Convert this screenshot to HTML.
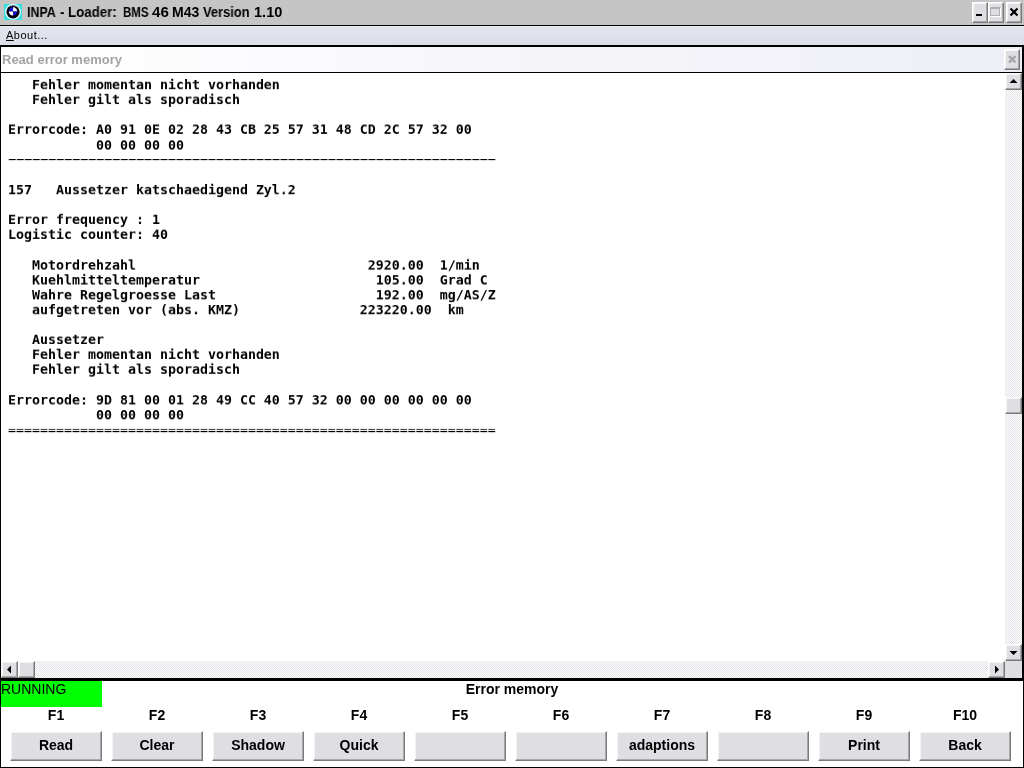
<!DOCTYPE html>
<html>
<head>
<meta charset="utf-8">
<title>INPA - Loader: BMS 46 M43 Version 1.10</title>
<style>
*{box-sizing:border-box;margin:0;padding:0}
html,body{width:1024px;height:768px;overflow:hidden;background:#fff}
body{position:relative;font-family:"Liberation Sans",sans-serif;color:#000}
.abs{position:absolute}
#root{position:absolute;left:0;top:0;width:1024px;height:768px;overflow:hidden;will-change:transform}
#titlebar{left:0;top:0;width:1024px;height:25px;background:#c5c5c5}
#title{left:0;top:3px;font-size:13.5px;font-weight:bold;line-height:18px;white-space:pre;transform-origin:0 0;transform:scaleY(1.1)}
#title span{position:absolute;top:0;transform-origin:0 0;display:block;will-change:transform}
#line1{left:0;top:25px;width:1024px;height:1px;background:#000}
#menubar{left:0;top:26px;width:1024px;height:19px;background:linear-gradient(#ecedf5 0,#e3e5ee 2px,#dfe1ea 60%,#dcdee8 100%)}
#about{left:6px;top:28px;font-size:11px;line-height:14px;letter-spacing:0.5px;will-change:transform}
#line2{left:0;top:45px;width:1024px;height:2px;background:#000}
#lborder{left:0;top:45px;width:1px;height:723px;background:#000}
#rborder{left:1023px;top:45px;width:1px;height:723px;background:#000}
#rborder2{left:1022px;top:45px;width:1px;height:636px;background:#000}
#bborder{left:0;top:767px;width:1024px;height:1px;background:#000}
#panel{left:1px;top:47px;width:1021px;height:25px;background:linear-gradient(90deg,#ffffff 0%,#fcfcfe 20%,#f6f6fa 50%,#eeeef7 100%)}
#paneltxt{left:2px;top:52px;font-size:13px;font-weight:bold;color:#a3a3a3;line-height:16px;letter-spacing:0}
#line3{left:0;top:72px;width:1023px;height:1px;background:#000}
.btn{background:#dfdfe3;border:1px solid;border-color:#fff #7b7b7b #7b7b7b #fff;box-shadow:inset -1px -1px 0 #a8a8ab, inset 1px 1px 0 #f4f4f6}
.track{background-color:#f2f2f4;background-image:conic-gradient(#fff 25%,#e2e2e6 0 50%,#fff 0 75%,#e2e2e6 0);background-size:2px 2px}
#log{left:8px;top:78px;font-family:"DejaVu Sans Mono","Liberation Mono",monospace;font-weight:bold;font-size:13.29px;line-height:16.129px;white-space:pre;transform-origin:0 0;transform:scaleY(.93);will-change:transform}
.sep{left:8px;font-family:"DejaVu Sans Mono","Liberation Mono",monospace;font-size:13.29px;line-height:15px;white-space:pre;transform-origin:0 0;will-change:transform}
#dashes{top:152px;left:4.2px;letter-spacing:-4.135px;transform:scaleX(2.07)}
#equals{top:425px;transform:scaleY(.76)}
#line4{left:0;top:678px;width:1024px;height:3px;background:#000}
#running{left:1px;top:681px;width:101px;height:26px;background:#00ff00;font-size:14px;line-height:16px;padding-left:0px}
#status{left:0;top:681px;width:1024px;text-align:center;font-size:14px;font-weight:bold;line-height:16px}
.fk{top:707px;width:92px;text-align:center;font-size:14px;font-weight:bold;line-height:16px}
.fb{top:731px;width:92px;height:30px;text-align:center;font-size:14px;font-weight:bold;line-height:27px}
</style>
</head>
<body>
<div id="root">
<div id="titlebar" class="abs"></div>
<svg class="abs" style="left:4px;top:4px" width="18" height="16" viewBox="0 0 18 16">
<rect x="0" y="0" width="18" height="16" fill="#3adede"/>
<circle cx="9" cy="7.8" r="7.9" fill="#dcffff"/>
<circle cx="9" cy="7.8" r="6.6" fill="#00000c"/>
<path d="M9 7.4 L9 3.2 A4.2 4.2 0 0 0 4.8 7.4 Z" fill="#1414d8"/>
<path d="M9 7.4 L13.2 7.4 A4.2 4.2 0 0 0 9 3.2 Z" fill="#ffffff"/>
<path d="M9 7.4 L9 11.6 A4.2 4.2 0 0 0 13.2 7.4 Z" fill="#1414d8"/>
<path d="M9 7.4 L4.8 7.4 A4.2 4.2 0 0 0 9 11.6 Z" fill="#ffffff"/>
<path d="M6.5 2 L8 1.6 M9.6 1.5 L10.2 2.4 M11.4 2 L12.3 2.9" stroke="#c8d0d8" stroke-width="0.8" fill="none"/>
</svg>
<div id="title" class="abs"><span style="left:27px;transform:scaleX(.92)">INPA</span><span style="left:60px">-</span><span style="left:68px;transform:scaleX(.985)">Loader:</span><span style="left:123px;transform:scaleX(.85)">BMS</span><span style="left:152px;transform:scaleX(1.12)">46</span><span style="left:172px;transform:scaleX(1.04)">M43</span><span style="left:203px;transform:scaleX(.955)">Version</span><span style="left:254px;transform:scaleX(1.08)">1.10</span></div>
<!-- window buttons -->
<div class="abs btn" style="left:972px;top:2px;width:16px;height:21px"></div>
<div class="abs" style="left:976px;top:14px;width:6px;height:2px;background:#000"></div>
<div class="abs btn" style="left:988px;top:2px;width:16px;height:21px"></div>
<div class="abs" style="left:990px;top:7px;width:10px;height:9px;border:1px solid #b0b0b4;border-top-width:2px;box-shadow:1px 1px 0 #fff"></div>
<div class="abs btn" style="left:1006px;top:2px;width:16px;height:21px"></div>
<svg class="abs" style="left:1009px;top:7px" width="10" height="10" viewBox="0 0 10 10"><path d="M1.5 1.5 L8.5 8.5 M8.5 1.5 L1.5 8.5" stroke="#000" stroke-width="2.2"/></svg>

<div id="line1" class="abs"></div>
<div id="menubar" class="abs"></div>
<div id="about" class="abs"><u>A</u>bout...</div>
<div id="line2" class="abs"></div>
<div id="panel" class="abs"></div>
<div id="paneltxt" class="abs">Read error memory</div>
<div class="abs btn" style="left:1004px;top:49px;width:16px;height:21px"></div>
<svg class="abs" style="left:1007px;top:54px" width="11" height="11" viewBox="0 0 11 11"><path d="M2 2 L8.5 8.5 M8.5 2 L2 8.5" stroke="#a6a6a8" stroke-width="2.4"/></svg>
<div id="line3" class="abs"></div>

<!-- vertical scrollbar -->
<div class="abs track" style="left:1005px;top:73px;width:17px;height:588px"></div>
<div class="abs btn" style="left:1005px;top:73px;width:17px;height:17px"></div>
<svg class="abs" style="left:1009px;top:78px" width="9" height="6" viewBox="0 0 9 6"><path d="M0.5 5 L4.5 1 L8.5 5 Z" fill="#000"/></svg>
<div class="abs btn" style="left:1005px;top:397px;width:17px;height:17px"></div>
<div class="abs btn" style="left:1005px;top:644px;width:17px;height:17px"></div>
<svg class="abs" style="left:1009px;top:650px" width="9" height="6" viewBox="0 0 9 6"><path d="M0.5 1 L4.5 5 L8.5 1 Z" fill="#000"/></svg>
<div class="abs" style="left:1005px;top:661px;width:17px;height:17px;background:#dfdfe3"></div>
<!-- horizontal scrollbar -->
<div class="abs track" style="left:1px;top:661px;width:1004px;height:17px"></div>
<div class="abs btn" style="left:1px;top:661px;width:17px;height:17px"></div>
<svg class="abs" style="left:6px;top:665px" width="6" height="9" viewBox="0 0 6 9"><path d="M5 0.5 L1 4.5 L5 8.5 Z" fill="#000"/></svg>
<div class="abs btn" style="left:18px;top:661px;width:17px;height:17px"></div>
<div class="abs btn" style="left:988px;top:661px;width:17px;height:17px"></div>
<svg class="abs" style="left:994px;top:665px" width="6" height="9" viewBox="0 0 6 9"><path d="M1 0.5 L5 4.5 L1 8.5 Z" fill="#000"/></svg>

<pre id="log" class="abs">   Fehler momentan nicht vorhanden
   Fehler gilt als sporadisch

Errorcode: A0 91 0E 02 28 43 CB 25 57 31 48 CD 2C 57 32 00
           00 00 00 00


157   Aussetzer katschaedigend Zyl.2

Error frequency : 1
Logistic counter: 40

   Motordrehzahl                             2920.00  1/min
   Kuehlmitteltemperatur                      105.00  Grad C
   Wahre Regelgroesse Last                    192.00  mg/AS/Z
   aufgetreten vor (abs. KMZ)               223220.00  km

   Aussetzer
   Fehler momentan nicht vorhanden
   Fehler gilt als sporadisch

Errorcode: 9D 81 00 01 28 49 CC 40 57 32 00 00 00 00 00 00
           00 00 00 00
</pre>
<div id="dashes" class="abs sep">-------------------------------------------------------------</div>
<div id="equals" class="abs sep">=============================================================</div>

<div id="line4" class="abs"></div>
<div id="status" class="abs">Error memory</div>
<div id="running" class="abs">RUNNING</div>

<div class="abs fk" style="left:10px">F1</div>
<div class="abs fk" style="left:111px">F2</div>
<div class="abs fk" style="left:212px">F3</div>
<div class="abs fk" style="left:313px">F4</div>
<div class="abs fk" style="left:414px">F5</div>
<div class="abs fk" style="left:515px">F6</div>
<div class="abs fk" style="left:616px">F7</div>
<div class="abs fk" style="left:717px">F8</div>
<div class="abs fk" style="left:818px">F9</div>
<div class="abs fk" style="left:919px">F10</div>

<div class="abs btn fb" style="left:10px">Read</div>
<div class="abs btn fb" style="left:111px">Clear</div>
<div class="abs btn fb" style="left:212px">Shadow</div>
<div class="abs btn fb" style="left:313px">Quick</div>
<div class="abs btn fb" style="left:414px"></div>
<div class="abs btn fb" style="left:515px"></div>
<div class="abs btn fb" style="left:616px">adaptions</div>
<div class="abs btn fb" style="left:717px"></div>
<div class="abs btn fb" style="left:818px">Print</div>
<div class="abs btn fb" style="left:919px">Back</div>

<div id="lborder" class="abs"></div>
<div id="rborder" class="abs"></div>
<div id="rborder2" class="abs"></div>
<div id="bborder" class="abs"></div>
</div>
</body>
</html>
